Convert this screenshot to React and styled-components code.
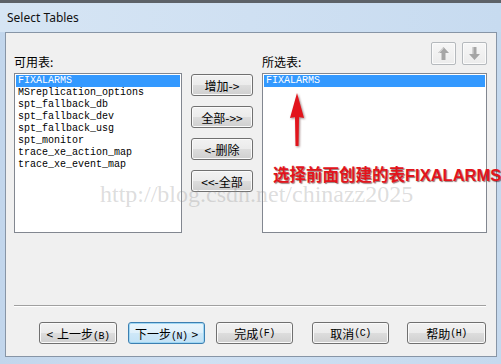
import React from "react";
import styled, { createGlobalStyle } from "styled-components";

const Global = createGlobalStyle`
  html, body { margin: 0; padding: 0; background: #c6d8ec; }
  body { font-family: "Noto Sans CJK SC", "Liberation Sans", sans-serif; }
  * { box-sizing: border-box; }
`;

const Window = styled.div`
  width: 501px;
  height: 364px;
  overflow: hidden;
  display: flex;
  flex-direction: column;
  background: linear-gradient(90deg, #c2d6ec 0%, #cfe0f2 40%, #c5d9ee 100%);
  border-top: 3px solid #5d6268;
`;

const TitleBar = styled.div`
  height: 29px;
  display: flex;
  align-items: center;
  padding-left: 7px;
  font-family: "Noto Sans", "Liberation Sans", sans-serif;
  font-size: 12px;
  color: #111;
  background: linear-gradient(90deg, #d6e5f4 0%, #cfe0f2 50%, #c7dbf0 100%);
`;

const Panel = styled.div`
  position: relative;
  height: 325px;
  margin: 0 4px 7px 5px;
  border: 1px solid #8795a6;
  background: #f0f0f0;
  padding: 9px 9px 0 8px;
  display: flex;
  flex-direction: column;
`;

const Grid = styled.div`
  display: grid;
  grid-template-columns: 168px 62px 225px;
  grid-template-rows: 31px 160px;
  column-gap: 9px;
`;

const Label = styled.div`
  align-self: end;
  margin-bottom: 4px;
  font-size: 12px;
  line-height: 14px;
  color: #000;
`;

const RightHeader = styled.div`
  display: flex;
  justify-content: space-between;
`;

const IconGroup = styled.div`
  display: flex;
  gap: 6px;
  align-self: flex-start;
`;

const IconButton = styled.div`
  width: 25px;
  height: 23px;
  border: 1px solid #b5b9bd;
  border-radius: 2px;
  background: linear-gradient(#f6f6f6, #ececec);
  box-shadow: inset 0 0 0 1px #fbfbfb;
  display: flex;
  align-items: center;
  justify-content: center;
`;

const ListBox = styled.div`
  border: 1px solid #828790;
  background: #fff;
  padding: 1px;
  overflow: hidden;
`;

const Item = styled.div`
  height: 12px;
  line-height: 12px;
  padding-left: 2px;
  font-family: "Liberation Mono", monospace;
  font-size: 10px;
  white-space: nowrap;
  color: ${(p) => (p.$selected ? "#fff" : "#000")};
  background: ${(p) => (p.$selected ? "#3399ff" : "transparent")};
`;

const MidColumn = styled.div`
  display: flex;
  flex-direction: column;
  gap: 10px;
  padding-top: 1px;
`;

const Button = styled.div`
  width: ${(p) => p.$w || 62}px;
  height: 22px;
  margin-left: ${(p) => p.$ml || 0}px;
  border: 1px solid ${(p) => (p.$default ? "#3c7fb1" : "#707070")};
  border-radius: 3px;
  background: ${(p) =>
    p.$default
      ? "linear-gradient(#e9f5fc 0%, #dff0fb 50%, #cfe8f8 50%, #c2e2f6 100%)"
      : "linear-gradient(#f2f2f2 0%, #ebebeb 50%, #dddddd 50%, #cfcfcf 100%)"};
  box-shadow: inset 0 0 0 1px ${(p) => (p.$default ? "#9fd7f4" : "#fafafa")};
  display: flex;
  align-items: center;
  justify-content: center;
  gap: ${(p) => p.$gap || 0}px;
  font-size: 12px;
  color: #000;
  white-space: nowrap;
  flex-shrink: 0;
`;

const Separator = styled.div`
  margin-top: 72px;
  width: 472px;
  height: 2px;
  border-top: 1px solid #a0a0a0;
  border-bottom: 1px solid #ffffff;
`;

const ButtonRow = styled.div`
  display: flex;
  margin-top: 15px;
  padding-left: 25px;
`;

const Mn = styled.span`
  font-family: "Liberation Mono", monospace;
  font-size: 10px;
  letter-spacing: -0.5px;
`;

const Watermark = styled.div`
  position: absolute;
  left: 94px;
  top: 149px;
  font-family: "Liberation Serif", serif;
  font-size: 24px;
  line-height: 24px;
  color: rgba(140, 140, 140, 0.3);
  white-space: nowrap;
  pointer-events: none;
`;

const Annotation = styled.div`
  position: absolute;
  left: 267px;
  top: 132px;
  font-family: "Liberation Sans", "Noto Sans CJK SC", sans-serif;
  font-weight: bold;
  font-size: 16.5px;
  line-height: 20px;
  color: #e2141c;
  text-shadow: 1px 1px 1px rgba(60, 0, 0, 0.55);
  white-space: nowrap;
`;

const RedArrow = styled.svg`
  position: absolute;
  left: 279px;
  top: 59px;
  filter: drop-shadow(1px 1px 1px rgba(60, 0, 0, 0.5));
`;

const UpIcon = () => (
  <svg width="11" height="13" viewBox="0 0 11 13">
    <polygon points="5.5,0 11,6 7.5,6 7.5,13 3.5,13 3.5,6 0,6" fill="#a5a5a5" />
    <polygon points="5.5,0 0,6 1.5,6 5.5,1.8" fill="#d8d8d8" />
  </svg>
);

const DownIcon = () => (
  <svg width="11" height="13" viewBox="0 0 11 13">
    <polygon points="3.5,0 7.5,0 7.5,7 11,7 5.5,13 0,7 3.5,7" fill="#a5a5a5" />
    <polygon points="3.5,0 3.5,7 4.5,7 4.5,0" fill="#d8d8d8" />
  </svg>
);

const available = [
  "FIXALARMS",
  "MSreplication_options",
  "spt_fallback_db",
  "spt_fallback_dev",
  "spt_fallback_usg",
  "spt_monitor",
  "trace_xe_action_map",
  "trace_xe_event_map",
];

export default function App() {
  return (
    <>
      <Global />
      <Window>
        <TitleBar>Select Tables</TitleBar>
        <Panel>
          <Watermark>http://blog.csdn.net/chinazz2025</Watermark>
          <Grid>
            <Label>可用表:</Label>
            <div />
            <RightHeader>
              <Label>所选表:</Label>
              <IconGroup>
                <IconButton>
                  <UpIcon />
                </IconButton>
                <IconButton>
                  <DownIcon />
                </IconButton>
              </IconGroup>
            </RightHeader>
            <ListBox>
              {available.map((t, i) => (
                <Item key={t} $selected={i === 0}>
                  {t}
                </Item>
              ))}
            </ListBox>
            <MidColumn>
              <Button>增加-&gt;</Button>
              <Button>全部-&gt;&gt;</Button>
              <Button>&lt;-删除</Button>
              <Button>&lt;&lt;-全部</Button>
            </MidColumn>
            <ListBox>
              <Item $selected>FIXALARMS</Item>
            </ListBox>
          </Grid>
          <Separator />
          <ButtonRow>
            <Button $w={78} $gap={4}>
              <span>&lt;</span>
              <span>
                上一步<Mn>(B)</Mn>
              </span>
            </Button>
            <Button $w={77} $ml={11} $default $gap={4}>
              <span>
                下一步<Mn>(N)</Mn>
              </span>
              <span>&gt;</span>
            </Button>
            <Button $w={77} $ml={11}>
              完成<Mn>(F)</Mn>
            </Button>
            <Button $w={77} $ml={19}>
              取消<Mn>(C)</Mn>
            </Button>
            <Button $w={79} $ml={18}>
              帮助<Mn>(H)</Mn>
            </Button>
          </ButtonRow>
          <RedArrow width="24" height="56" viewBox="0 0 24 56">
            <polygon points="12,1 19,26 14,25 13.5,54 10.5,54 10,25 5,26" fill="#e2141c" />
          </RedArrow>
          <Annotation>选择前面创建的表FIXALARMS</Annotation>
        </Panel>
      </Window>
    </>
  );
}
